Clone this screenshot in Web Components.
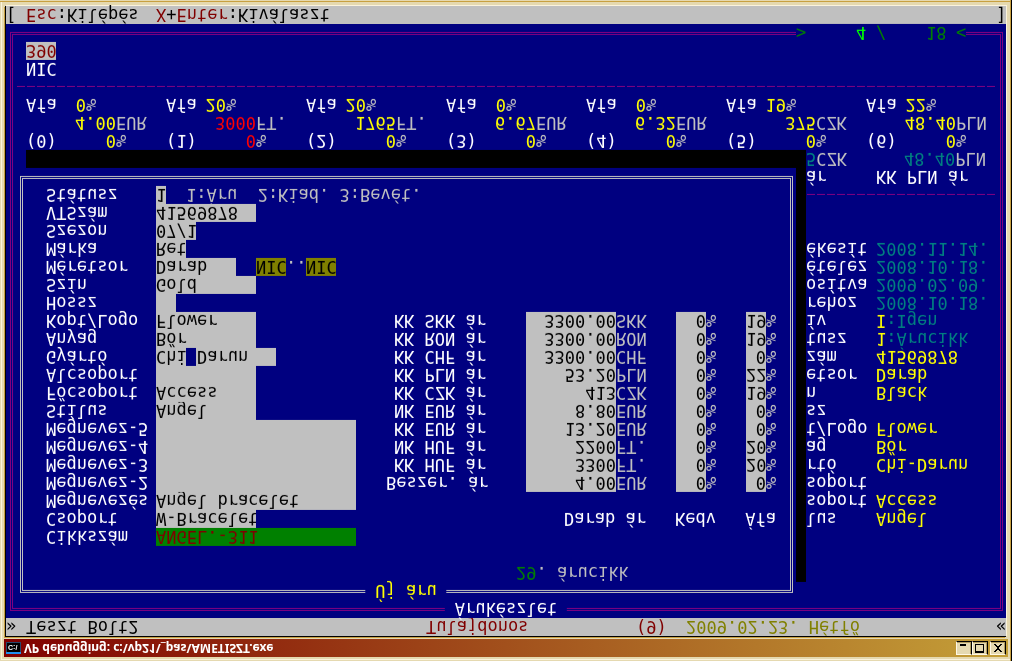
<!DOCTYPE html>
<html lang="hu">
<head>
<meta charset="utf-8">
<title>VP debugging: c:\vp21\_pas\AMETISZT.exe</title>
<style>
  body { margin: 0; background: #e5d9b0; }
</style>
</head>
<body>
<app-window>
  <title-bar slot="title">VP debugging: c:\vp21\_pas\AMETISZT.exe</title-bar>
  <status-head></status-head>
  <tui-frame style="--line:#800080;--title:#fff">
    <span slot="title">Árukészlet</span>
    <stock-page></stock-page>
    <record-pager slot="foot"></record-pager>
  </tui-frame>
  <status-keys></status-keys>
  <tui-frame slot="dialog" style="--line:#c0c0c0;--title:#ff0">
    <span slot="title">Új áru</span>
    <item-form></item-form>
  </tui-frame>
</app-window>

<script>
// Registers an element whose shadow root is cloned from the given markup.
function define(name, html, setup) {
  const tpl = document.createElement('template');
  tpl.innerHTML = html;
  customElements.define(name, class extends HTMLElement {
    constructor() {
      super();
      this.attachShadow({ mode: 'open' }).append(tpl.content.cloneNode(true));
    }
    connectedCallback() {
      if (setup && !this.ready) { this.ready = true; setup(this, this.shadowRoot); }
    }
  });
}

// The window: bevelled frame, title bar and the text console. One character cell is --c by --r.
define('app-window', `
<style>
  :host { --c: 10px; --r: 18px; display: block; transform: scaleY(-1); box-sizing: border-box;
    padding: 4px 6px 6px 5px; background: #e5d9b0;
    box-shadow: inset -1px 0 #000, inset -2px 0 #c8a040, inset 0 -1px #e5d9b0, inset 0 -2px #c8a040,
      inset 1px 1px #e5d9b0, inset 2px 2px #fbf3dc; }
  .console { position: relative; margin-top: 2px; border: solid #000; border-width: 1px 0 0 1px;
    background: #000080; color: #fff; font: 17px/18px "DejaVu Sans Mono", monospace;
    box-shadow: -1px -1px #c8a040, 1px 1px #fbf3dc; }
  .dialog { position: absolute; top: calc(2 * var(--r)); left: var(--c); width: calc(78 * var(--c));
    background: #000080; box-shadow: var(--c) var(--r) #000; }
</style>
<slot name="title"></slot>
<div class="console"><slot></slot><div class="dialog"><slot name="dialog"></slot></div></div>`);

define('title-bar', `
<style>
  :host { display: flex; align-items: center; height: 18px; margin: 0 -2px 0 -1px; padding: 0 2px;
    background: linear-gradient(90deg, #800000, #c4a038); color: #fff;
    font: bold 12px/18px "Noto Sans", sans-serif; }
  .icon { display: flex; margin-right: 3px; }
  .name { flex: 1; white-space: pre; }
  button { box-sizing: border-box; width: 16px; height: 14px; padding: 0; border: 1px solid;
    border-color: #fff8e4 #000 #000 #fff8e4; background: #e5d9b0; box-shadow: inset -1px -1px #b09c60; }
  button:last-child { margin-left: 2px; }
  svg { display: block; }
</style>
<span class="icon"><svg width="15" height="12" viewBox="0 0 15 12"><rect width="15" height="12" fill="#28486c"/><rect width="15" height="2" fill="#2090f0"/><rect x="1" y="2" width="13" height="9" fill="#000"/><text x="2" y="9" font-size="7" font-weight="bold" font-family="Liberation Sans" fill="#fff">C:\\</text></svg></span>
<span class="name"><slot></slot></span>
<button aria-label="Minimize"><svg width="14" height="12"><path d="M3 8h6v2H3z"/></svg></button>
<button aria-label="Maximize"><svg width="14" height="12"><path fill-rule="evenodd" d="M2 1h9v9H2zM3 3v6h7V3z"/></svg></button>
<button aria-label="Close"><svg width="14" height="12"><path d="M3 2h2v1h1v1h2V3h1V2h2v1h-1v1H9v1H8v2h1v1h1v1h1v1H9V9H8V8H6v1H5v1H3V9h1V8h1V7h1V5H5V4H4V3H3z"/></svg></button>`);

const bar = `:host { height: var(--r); background: #c0c0c0; color: #000; white-space: nowrap; }
  .hot { color: #800000; }`;

define('status-head', `
<style>${bar}
  :host { display: grid; grid-template-columns: calc(2 * var(--c)) calc(40 * var(--c)) calc(21 * var(--c)) calc(5 * var(--c)) 1fr var(--c); }
  .date { color: #808000; }
</style>
<span>»</span><span>Teszt Bolt2</span><span class="hot">Tulajdonos</span><span class="hot">(9)</span><span class="date">2009.02.23. Hétfő</span><span>«</span>`);

define('status-keys', `
<style>${bar}
  :host { display: grid; grid-template-columns: calc(2 * var(--c)) calc(13 * var(--c)) 1fr var(--c); }
</style>
<span>[</span><span><span class="hot">Esc</span>:Kilépés</span><span><span class="hot">X</span>+<span class="hot">Enter</span>:Kiválaszt</span><span>]</span>`);

// Double-line frame running through the middle of its outermost cells.
define('tui-frame', `
<style>
  :host { display: block; position: relative; padding: 7px 3px 8px 4px; }
  .box { border: 3px double var(--line); padding: 8px 0 7px; }
  .title { position: absolute; top: 0; left: 50%; transform: translateX(-50%);
    padding: 0 var(--c); background: #000080; color: var(--title); white-space: nowrap; }
  .foot { position: absolute; bottom: 0; right: calc(4 * var(--c)); background: #000080; }
</style>
<div class="box"><slot></slot></div>
<div class="title"><slot name="title"></slot></div>
<div class="foot"><slot name="foot"></slot></div>`);

define('record-pager', `
<style>
  :host { display: grid; grid-template-columns: calc(6 * var(--c)) calc(2 * var(--c)) calc(5 * var(--c)) calc(3 * var(--c)) var(--c); color: #008000; }
  b { font-weight: normal; color: #0f0; }
</style>
<span>&gt;</span><b>4</b><span>/</span><span>18</span><span>&lt;</span>`);

// One price level: discount, price and VAT.
define('price-level', `
<style>
  :host { display: grid; grid-template-columns: repeat(3, calc(3 * var(--c))) 1fr;
    grid-auto-rows: var(--r); color: #c0c0c0; }
  .no { color: #fff; }
  .v { color: #ff0; text-align: right; }
  .wide { grid-column: 2 / 4; }
  .price { grid-column: 1 / 4; }
  .rest { grid-column: 3 / 5; }
  :host([warn]) .w { color: #f00; }
</style>
<span class="no n"></span><span class="v wide w">0</span><span>%</span>
<span class="v price w p"></span><span class="cur"></span>
<span class="no">Afa</span><span class="v vat"></span><span class="rest">%</span>`, (el, root) => {
  root.querySelector('.n').textContent = '(' + el.getAttribute('no') + ')';
  root.querySelector('.p').textContent = el.getAttribute('price');
  root.querySelector('.cur').textContent = el.getAttribute('cur');
  root.querySelector('.vat').textContent = el.getAttribute('vat');
});

define('stock-page', `
<style>
  :host { display: block; padding: calc(4 * var(--r)) 0 0 13px; white-space: nowrap; }
  .side { margin: 0; padding: 0 0 calc(2 * var(--r)) calc(78 * var(--c)); display: grid; grid-auto-rows: var(--r);
    grid-template-columns: calc(7 * var(--c)) 1fr; }
  dd { margin: 0; color: #ff0; }
  .t { color: #008080; }
  .u { color: #c0c0c0; }
  hr { height: 1px; border: 0; margin: 9px 4px 8px -10px;
    background: repeating-linear-gradient(90deg, transparent 0 1px, #800080 1px 9px, transparent 9px 10px); }
  .heads { margin-left: calc(78 * var(--c)); display: grid;
    grid-template-columns: calc(7 * var(--c)) calc(11 * var(--c)); grid-auto-rows: var(--r); }
  .r { text-align: right; }
  .kk { padding-right: calc(2 * var(--c)); }
  .levels { display: grid; grid-template-columns: repeat(7, calc(14 * var(--c))); margin-right: -20px; }
  .mark { width: calc(3 * var(--c)); background: #c0c0c0; color: #800000; }
</style>
<dl class="side"></dl>
<hr>
<div class="heads"><span>ár</span><span class="r kk">KK PLN ár</span><span><span class="t">5</span><span class="u">CZK</span></span><span class="r"><span class="t">48.40</span><span class="u">PLN</span></span></div>
<div class="levels">
<price-level no="0" price="4.00" cur="EUR" vat="0"></price-level>
<price-level no="1" price="3000" cur="FT." vat="20" warn></price-level>
<price-level no="2" price="1765" cur="FT." vat="20"></price-level>
<price-level no="3" price="6.67" cur="EUR" vat="0"></price-level>
<price-level no="4" price="6.32" cur="EUR" vat="0"></price-level>
<price-level no="5" price="375" cur="CZK" vat="19"></price-level>
<price-level no="6" price="48.40" cur="PLN" vat="22"></price-level>
</div>
<hr>
<div>NIC</div>
<div class="mark">390</div>`, (el, root) => {
  const rows = [['lus', 'Angel'], ['soport', 'Access'], ['soport', ''], ['rtó', 'Chi-Darun'], ['ag', 'Bőr'],
    ['t/Logo', 'Flower'], ['sz', ''], ['n', 'Black'], ['etsor', 'Darab'], ['zám', '41569878'],
    ['tusz', '1', ':Árucikk'], ['ív', 'I', ':Igen'], ['rehoz', '', '2008.10.18.'],
    ['osítva', '', '2009.02.09.'], ['ételez', '', '2008.10.18.'], ['ékesít', '', '2008.11.14.']];
  root.querySelector('.side').innerHTML = rows.map(([k, v, t]) =>
    `<dt>${k}</dt><dd>${v}${t ? `<span class="t">${t}</span>` : ''}</dd>`).join('');
});

const inputCss = `input { flex: none; box-sizing: border-box; height: var(--r); padding: 0; border: 0; border-radius: 0;
    background: #c0c0c0; color: #000; font: inherit; outline: 0; }`;

// A labelled text box, --w cells wide; its slot takes what follows the box.
define('form-field', `
<style>${inputCss}
  :host { display: flex; height: var(--r); white-space: pre; color: #c0c0c0; }
  label { flex: none; width: calc(11 * var(--c)); color: #fff; }
  input { width: calc(var(--w) * var(--c)); }
  :host([active]) input { background: #008000; color: #800000; }
  :host([cursor]) input { background: linear-gradient(#000080, #000080) 30px 0 / 10px 18px no-repeat #c0c0c0; }
</style>
<label for="i"></label><input id="i"><slot></slot>`, (el, root) => {
  root.querySelector('label').textContent = el.getAttribute('label');
  root.querySelector('input').value = el.getAttribute('value') || '';
  el.style.setProperty('--w', el.getAttribute('cols'));
});

define('price-table', `
<style>${inputCss}
  :host { display: block; }
  table { border-collapse: collapse; table-layout: fixed; width: calc(39 * var(--c)); white-space: nowrap; }
  th, td { height: var(--r); padding: 0; font-weight: normal; text-align: right; }
  td { color: #c0c0c0; }
  thead tr { height: calc(2 * var(--r)); vertical-align: top; }
  td div { display: flex; justify-content: flex-end; }
  td span { width: var(--c); text-align: left; }
  td:nth-child(2) span { width: calc(3 * var(--c)); }
  input { text-align: right; width: calc(9 * var(--c)); }
  td:nth-child(3) input { width: calc(3 * var(--c)); }
  td:nth-child(4) input { width: calc(2 * var(--c)); }
  .a { width: calc(10 * var(--c)); } .b { width: calc(16 * var(--c)); }
  .d { width: calc(7 * var(--c)); } .e { width: calc(6 * var(--c)); }
</style>
<table><colgroup><col class="a"><col class="b"><col class="d"><col class="e"></colgroup>
<thead><tr><td></td><th>Darab ár</th><th>Kedv</th><th>Áfa</th></tr></thead><tbody></tbody></table>`, (el, root) => {
  const rows = [['Beszer. ár', '4.00', 'EUR', 0], ['KK HUF ár', '3300', 'FT.', 20], ['NK HUF ár', '2200', 'FT.', 20],
    ['KK EUR ár', '13.20', 'EUR', 0], ['NK EUR ár', '8.80', 'EUR', 0], ['KK CZK ár', '413', 'CZK', 19],
    ['KK PLN ár', '53.20', 'PLN', 22], ['KK CHF ár', '3300.00', 'CHF', 0], ['KK RON ár', '3300.00', 'RON', 19],
    ['KK SKK ár', '3300.00', 'SKK', 19]];
  const cell = (name, value, unit) => `<td><div><input aria-label="${name}" value="${value}"><span>${unit}</span></div></td>`;
  root.querySelector('tbody').innerHTML = rows.map(([n, p, c, v]) =>
    `<tr><th scope="row">${n}</th>${cell(n, p, c)}${cell(n + ' Kedv', 0, '%')}${cell(n + ' Áfa', v, '%')}</tr>`).join('');
});

define('item-form', `
<style>
  :host { display: grid; grid-template-columns: calc(34 * var(--c)) 1fr; padding-left: 23px; }
  .left { padding-top: calc(2 * var(--r)); }
  .count { margin: 0 0 calc(2 * var(--r)) calc(13 * var(--c)); color: #c0c0c0; }
  .count b { font-weight: normal; color: #008000; }
  .hint { margin-left: calc(2 * var(--c)); }
  .size { width: calc(3 * var(--c)); background: #808000; color: #000; }
  .first { margin-left: calc(2 * var(--c)); }
  .dots { width: calc(2 * var(--c)); }
</style>
<form class="left">
  <form-field label="Cikkszám" value="ANGEL.-311" cols="20" active></form-field>
  <form-field label="Csoport" value="W-Bracelet" cols="10"></form-field>
  <form-field label="Megnevezés" value="Angel bracelet" cols="20"></form-field>
  <form-field label="Megnevez-2" cols="20"></form-field>
  <form-field label="Megnevez-3" cols="20"></form-field>
  <form-field label="Megnevez-4" cols="20"></form-field>
  <form-field label="Megnevez-5" cols="20"></form-field>
  <form-field label="Stílus" value="Angel" cols="10"></form-field>
  <form-field label="Főcsoport" value="Access" cols="10"></form-field>
  <form-field label="Alcsoport" cols="10"></form-field>
  <form-field label="Gyártó" value="Chi Darun" cols="12" cursor></form-field>
  <form-field label="Anyag" value="Bőr" cols="10"></form-field>
  <form-field label="Kopt/Logo" value="Flower" cols="10"></form-field>
  <form-field label="Hossz" cols="2"></form-field>
  <form-field label="Szín" value="Gold" cols="10"></form-field>
  <form-field label="Méretsor" value="Darab" cols="8"><span class="size first">NIC</span><span class="dots">..</span><span class="size">NIC</span></form-field>
  <form-field label="Márka" value="Ret" cols="3"></form-field>
  <form-field label="Szezon" value="07/1" cols="4"></form-field>
  <form-field label="VTSzám" value="41569878" cols="10"></form-field>
  <form-field label="Státusz" value="1" cols="1"><span class="hint">1:Áru  2:Kiad. 3:Bevét.</span></form-field>
</form>
<div><div class="count"><b>29</b>. árucikk</div><price-table></price-table></div>`);
</script>
</body>
</html>
